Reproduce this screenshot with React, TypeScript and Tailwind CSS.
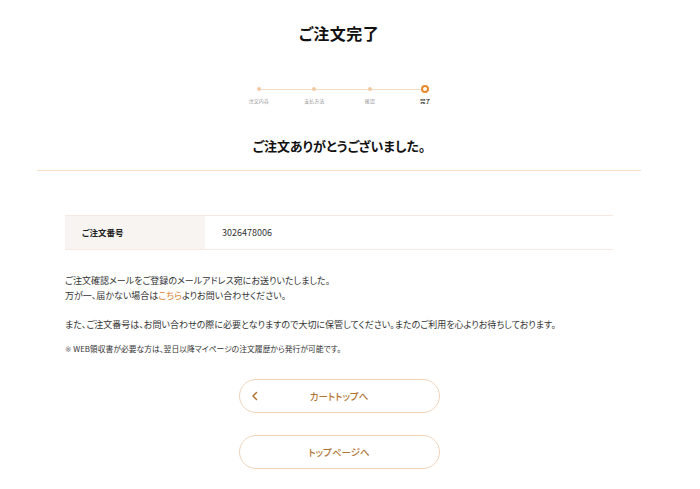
import React from "react";

const steps = [
  { label: "注文内容", active: false },
  { label: "支払方法", active: false },
  { label: "確認", active: false },
  { label: "完了", active: true },
];

export default function App() {
  return (
    <div
      className="w-[678px] bg-white text-[#222] [font-feature-settings:'palt']"
      style={{ fontFamily: '"Noto Sans CJK JP", "Noto Sans", sans-serif' }}
    >
      <div className="flex flex-col items-center pt-[21px]">
        <h1 className="text-[16px] font-bold leading-[24px] tracking-[0.5px] text-[#111]">ご注文完了</h1>

        <div className="relative mt-[39px] ml-[6px] flex">
          <div className="absolute left-[27px] right-[27px] top-[5px] h-px bg-[#f6dcc4]" />
          {steps.map((s) => (
            <div key={s.label} className="relative flex w-[55.5px] flex-col items-center">
              <div className="flex h-[10px] items-center justify-center">
                {s.active ? (
                  <div className="h-[8px] w-[8px] rounded-full border-2 border-[#e8892c] bg-white" />
                ) : (
                  <div className="h-[4px] w-[4px] rounded-full bg-[#f2caa3]" />
                )}
              </div>
              <div
                className={
                  "mt-[3px] text-[5px] leading-[7px] " +
                  (s.active ? "font-bold text-[#333]" : "text-[#999]")
                }
              >
                {s.label}
              </div>
            </div>
          ))}
        </div>

        <h2 className="mt-[32px] text-[13px] font-bold leading-[20px] text-[#111]">
          ご注文ありがとうございました。
        </h2>
      </div>

      <div className="mx-[37px] mt-[14px] h-px bg-[#f9dec6]" />

      <div className="mx-[65px] mt-[44px]">
        <div className="flex border-y border-[#f6eae0]">
          <div className="flex h-[33px] w-[140px] items-center bg-[#f8f4f1] pl-[17px] text-[8.5px] font-bold">
            ご注文番号
          </div>
          <div className="flex items-center pl-[17px] text-[9px] text-[#333]">3026478006</div>
        </div>

        <div className="mt-[23px] text-[9px] leading-[15px] text-[#333]">
          <p>ご注文確認メールをご登録のメールアドレス宛にお送りいたしました。</p>
          <p>
            万が一、届かない場合は<span className="text-[#d98232]">こちら</span>よりお問い合わせください。
          </p>
          <p className="mt-[14px]">
            また、ご注文番号は、お問い合わせの際に必要となりますので大切に保管してください。またのご利用を心よりお待ちしております。
          </p>
          <p className="mt-[11px] text-[7.8px] leading-[12px]">
            <span className="text-[#777]" style={{ fontFamily: '"DejaVu Sans", sans-serif' }}>{"\u203B\uFE0E"}</span> WEB領収書が必要な方は、翌日以降マイページの注文履歴から発行が可能です。
          </p>
        </div>
      </div>

      <div className="mt-[23px] flex flex-col items-center gap-[22px] pb-[21px]">
        <button className="relative flex h-[34px] w-[201px] items-center justify-center rounded-full border border-[#f0d5bb] bg-white text-[9.5px] font-medium text-[#b07435]">
          <svg
            className="absolute left-[11px] top-1/2 -translate-y-1/2"
            width="8"
            height="10"
            viewBox="0 0 8 10"
            fill="none"
          >
            <path d="M5.5 1.5 L2 5 L5.5 8.5" stroke="#b07435" strokeWidth="1.5" strokeLinecap="round" strokeLinejoin="round" />
          </svg>
          カートトップへ
        </button>
        <button className="flex h-[34px] w-[201px] items-center justify-center rounded-full border border-[#f0d5bb] bg-white text-[9.5px] font-medium text-[#b07435]">
          トップページへ
        </button>
      </div>
    </div>
  );
}
